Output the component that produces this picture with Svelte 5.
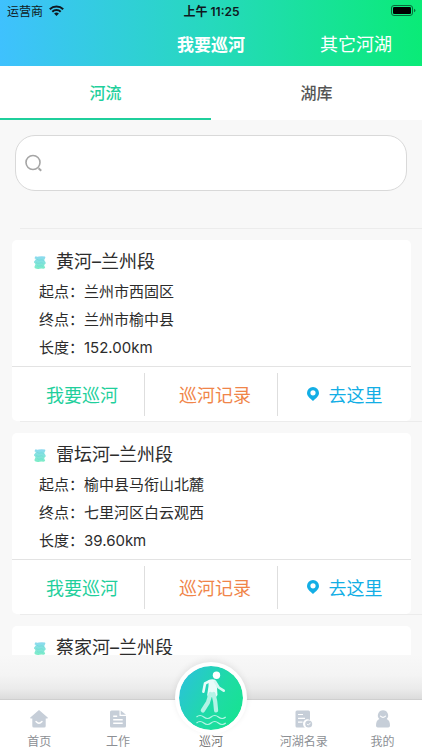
<script>
	let activeTab = 'river';
	let keyword = '';

	const tabs = [
		{ id: 'river', label: '河流' },
		{ id: 'lake', label: '湖库' }
	];

	const rivers = [
		{
			name: '黄河–兰州段',
			details: ['起点：兰州市西固区', '终点：兰州市榆中县', '长度：152.00km']
		},
		{
			name: '雷坛河–兰州段',
			details: ['起点：榆中县马衔山北麓', '终点：七里河区白云观西', '长度：39.60km']
		},
		{ name: '蔡家河–兰州段' }
	];
</script>

<div class="page">
	<header class="header">
		<div class="status">
			<span class="status__carrier">
				运营商
				<svg width="15" height="11" viewBox="0 0 15 11" aria-hidden="true">
					<g fill="none" stroke="#101820" stroke-width="2">
						<path d="M.8 4.2a9.6 9.6 0 0 1 13.4 0" />
						<path d="M3.3 6.8a6 6 0 0 1 8.4 0" />
					</g>
					<path d="M7.5 11 5.1 8.6a3.5 3.5 0 0 1 4.8 0z" fill="#101820" />
				</svg>
			</span>
			<span class="status__time">上午 11:25</span>
			<span class="status__battery">
				<svg width="25" height="11" viewBox="0 0 25 11" aria-hidden="true">
					<rect x=".5" y=".5" width="21" height="10" rx="2.5" fill="none" stroke="#0a6b3c" />
					<rect x="2" y="2" width="18" height="7" rx="1.3" fill="#000" />
					<path d="M23 3.8q1.4.4 1.4 1.7T23 7.2z" fill="#0a6b3c" />
				</svg>
			</span>
		</div>
		<div class="nav">
			<h1>我要巡河</h1>
			<a href="#other">其它河湖</a>
		</div>
	</header>

	<div class="tabs">
		{#each tabs as tab}
			<button class="tabs__item" class:active={activeTab === tab.id} on:click={() => (activeTab = tab.id)}>
				{tab.label}
			</button>
		{/each}
	</div>

	<main class="content">
		<label class="search">
			<svg width="18" height="18" viewBox="0 0 18 18" fill="none" stroke="#a5a5a5" stroke-width="1.6" aria-hidden="true">
				<circle cx="8" cy="8.5" r="7" />
				<path d="m13.6 14.3 2.6 2.4" stroke-width="2" />
			</svg>
			<input type="search" aria-label="搜索" bind:value={keyword} />
		</label>

		<ul class="list">
			{#each rivers as river}
				<li>
					<article class="card">
						<h2>
							<svg width="12" height="13" viewBox="0 0 12 13" aria-hidden="true">
								<path d="M1.5.3q1.5.8 3 .3t6.500-.2q.8 1-.2 2.400t.3 2.800-.2 2.700.3 3q-.2 1.400-1.700 1.400-2-.6-4 0T1 12.300Q0 11 1 9.500T.6 7 1 4.500.4 2.200z" fill="url(#water)" />
								<path d="M3 3.200q2 1.800 3.500.8T10 5M2 6.500q2 1.500 4 .5t3.500.8M3 9.500q1.500 1.300 3 .5t3 .5" fill="none" stroke="#62d6d6" stroke-width=".5" />
							</svg>
							{river.name}
						</h2>
						{#if river.details}
							{#each river.details as line}
								<p>{line}</p>
							{/each}
							<div class="actions">
								<button class="actions__patrol">我要巡河</button>
								<button class="actions__record">巡河记录</button>
								<button class="actions__go">
									<svg width="12" height="14" viewBox="0 0 12 14" aria-hidden="true">
										<path d="M6 0a6 6 0 0 1 6 6c0 3.2-3.2 5.4-6 8-2.8-2.6-6-4.800-6-8a6 6 0 0 1 6-6zm0 3.200a2.600 2.600 0 1 0 0 5.200 2.600 2.600 0 0 0 0-5.200z" fill="#13aee5" />
									</svg>
									去这里
								</button>
							</div>
						{/if}
					</article>
				</li>
			{/each}
		</ul>
	</main>

	<footer class="footer">
		<nav class="tabbar">
			<a href="#home">
				<svg width="18" height="18" viewBox="0 0 18 18" aria-hidden="true">
					<path d="M9 0 .3 7.5q-.5.9.5 1.100h1.500V16q0 1.500 1.500 1.500h10.400q1.500 0 1.500-1.500V8.600h1.500q1-.2.5-1.100z" fill="#c6ced8" />
					<path d="M6 11.500q3 3.400 6 0" fill="none" stroke="#fff" stroke-width="1.400" stroke-linecap="round" />
				</svg>
				<span>首页</span>
			</a>
			<a href="#work">
				<svg width="18" height="18" viewBox="0 0 18 18" aria-hidden="true">
					<path d="M2.500.5h8v5.500h6.500V16q0 1.500-1.500 1.500h-13Q1 17.500 1 16V2Q1 .5 2.500.5z" fill="#c6ced8" />
					<path d="M11.700.5 17 4.800h-5.300z" fill="#c6ced8" />
					<path d="M4.200 6.200h4M4.200 9.700h9.500M4.200 13.200h9.500" stroke="#fff" stroke-width="1.500" />
				</svg>
				<span>工作</span>
			</a>
			<a href="#patrol" class="tabbar__main">
				<span class="bubble">
					<svg width="64" height="64" viewBox="0 0 64 64" aria-hidden="true">
						<circle cx="37.500" cy="9.200" r="3.700" fill="#fff" />
						<path d="M29.500 14.200q3.500-1.500 6.500-.4l1.600 2.700.9 12.500-1.500 2H29l-.8-2 1.300-9z" fill="#e9fcfa" />
						<g fill="none" stroke-linecap="round" stroke-linejoin="round">
							<path d="M30.500 15.200 26 17.500l-1.600 8.300" stroke="#e9fcfa" stroke-width="2.600" />
							<path d="m36 15.500 3.700 6 5 3.200" stroke="#d6f8f3" stroke-width="2.600" />
							<path d="m31.500 28-2.600 8.500-5.100 8" stroke="#b4f3e6" stroke-width="4.200" />
							<path d="m34.500 28 1.700 7.500.9 9" stroke="#b4f3e6" stroke-width="4.200" />
						</g>
						<path d="M17.500 51q3.500-3 7.300 0t7.300 0 7.300 0 7.300 0M17.500 57q3.500-3 7.300 0t7.300 0 7.300 0 7.300 0" fill="none" stroke="#b9f5e7" stroke-width="1.200" />
					</svg>
				</span>
				<span>巡河</span>
			</a>
			<a href="#directory">
				<svg width="18" height="18" viewBox="0 0 18 18" aria-hidden="true">
					<path d="M2 .5h11.500q1.500 0 1.500 1.500v8a4.500 4.500 0 0 0-5 7.500H2Q.5 17.500.5 16V2Q.5.5 2 .5z" fill="#c6ced8" />
					<path d="M3 4.500h5M3 8.300h7M3 12.200h4.500" stroke="#fff" stroke-width="1.200" />
					<circle cx="13.700" cy="14" r="3.500" fill="#c6ced8" />
					<path d="m12 13.900 1.300 1.300 2.300-2.500" fill="none" stroke="#fff" />
				</svg>
				<span>河湖名录</span>
			</a>
			<a href="#mine">
				<svg width="18" height="18" viewBox="0 0 18 18" aria-hidden="true">
					<path d="M9 .3a5.200 5.200 0 0 1 3.700 8.800q3.300 1.500 3.300 6.400 0 2-1.800 2H3.800q-1.800 0-1.800-2 0-4.900 3.300-6.400A5.200 5.200 0 0 1 9 .3z" fill="#c6ced8" />
					<path d="M6.500 6.200q2.500 2.500 5 0" fill="none" stroke="#fff" stroke-width="1.200" stroke-linecap="round" />
				</svg>
				<span>我的</span>
			</a>
		</nav>
	</footer>

	<svg class="defs" width="0" height="0" aria-hidden="true">
		<linearGradient id="water" x1="0" y1="0" x2="0" y2="1">
			<stop offset="0" stop-color="#8cd9f0" />
			<stop offset="1" stop-color="#7cedc6" />
		</linearGradient>
	</svg>
</div>

<style>
	:global(body) {
		background: #f8f8f8;
	}

	.page {
		display: flex;
		flex-direction: column;
		height: 100vh;
		font-family: Inter, "Noto Sans CJK SC", sans-serif;
		color: #2c2c2c;
	}

	button,
	input {
		margin: 0;
		padding: 0;
		border: 0;
		background: none;
		font: inherit;
		color: inherit;
	}

	button,
	a {
		cursor: pointer;
	}

	a {
		text-decoration: none;
	}

	svg {
		flex: none;
	}

	.header {
		flex: none;
		background: linear-gradient(90deg, #3fc1fe, #26d9bd 50%, #0aeb77);
	}

	.status,
	.nav {
		display: grid;
		grid-template-columns: 1fr auto 1fr;
		align-items: center;
	}

	.status {
		height: 20px;
		padding: 0 6px 0 7px;
		font-size: 12px;
		color: #101820;
	}

	.status__carrier {
		display: flex;
		align-items: center;
		gap: 6px;
	}

	.status__time {
		font-weight: 600;
	}

	.status__battery {
		display: flex;
		justify-content: flex-end;
	}

	.nav {
		height: 46px;
		color: #fff;
	}

	.nav h1 {
		grid-column: 2;
		margin: 0;
		font-size: 17px;
		font-weight: 600;
	}

	.nav a {
		justify-self: end;
		padding-right: 30px;
		font-size: 18px;
		color: inherit;
	}

	.tabs {
		display: flex;
		flex: none;
		background: #fff;
	}

	.tabs__item {
		flex: 1;
		height: 54px;
		border-bottom: 2px solid transparent;
		font-size: 16px;
		font-weight: 500;
		color: #555;
	}

	.tabs__item.active {
		border-color: #1fcf9c;
		color: #1fcf9c;
	}

	.content {
		flex: 1;
		min-height: 0;
		overflow: hidden;
	}

	.search {
		display: flex;
		align-items: center;
		gap: 8px;
		height: 54px;
		margin: 15px 15px 37px;
		padding: 0 9px;
		border: 1px solid #d9d9d9;
		border-radius: 20px;
		background: #fff;
	}

	.search input {
		flex: 1;
		min-width: 0;
		height: 40px;
		font-size: 16px;
		outline: none;
	}

	.list {
		margin: 0;
		padding: 1px 0 0;
		list-style: none;
		background: linear-gradient(#ececec, #ececec) 20px 0 / 100% 1px no-repeat;
	}

	.list li {
		padding: 11px 11px 1px 12px;
		background: linear-gradient(#ececec, #ececec) 20px 100% / 100% 1px no-repeat;
	}

	.card {
		padding-top: 8px;
		border-radius: 5px;
		background: #fff;
	}

	.card h2 {
		display: flex;
		align-items: center;
		gap: 10px;
		margin: 0 0 2px;
		padding-left: 22px;
		font-size: 18px;
		font-weight: 400;
		line-height: 28px;
	}

	.card p {
		margin: 0;
		padding-left: 27px;
		font-size: 15px;
		line-height: 28px;
	}

	.actions {
		display: grid;
		grid-template-columns: repeat(3, 1fr);
		align-items: center;
		height: 54px;
		margin-top: 4px;
		border-top: 1px solid #e3e3e3;
		font-size: 18px;
	}

	.actions button {
		display: flex;
		align-items: center;
		justify-content: center;
		gap: 10px;
		height: 43px;
		border-right: 1px solid #dedede;
	}

	.actions button:last-child {
		border-right: 0;
	}

	.actions .actions__patrol {
		padding-left: 8px;
		color: #1fcf9c;
	}

	.actions .actions__record {
		padding-left: 8px;
		color: #f08549;
	}

	.actions .actions__go {
		color: #13aee5;
	}

	.footer {
		flex: none;
		padding-top: 44px;
		background: linear-gradient(#f8f8f8, #f4f4f4 20px, #ebebeb 34px, #dcdcdc 44px);
	}

	.tabbar {
		display: grid;
		grid-template-columns: 1fr 1fr 107px 1fr 1fr;
		height: 50px;
		border-top: 1px solid #cfcfcf;
		background: #fff;
	}

	.tabbar a {
		display: flex;
		flex-direction: column;
		align-items: center;
		justify-content: flex-end;
		gap: 6px;
		font-size: 12px;
		line-height: 16px;
		color: #8c8f94;
	}

	.tabbar .tabbar__main {
		gap: 0;
		color: #777;
	}

	/* the round button rises above the bar */
	.bubble {
		display: flex;
		margin-top: -40px;
		border: 4px solid #fff;
		border-radius: 50%;
		background: #fff linear-gradient(120deg, #2cbfe0, #1fdba6 55%, #14e58c) padding-box;
		background-clip: padding-box;
		box-shadow: 0 -2px 6px rgba(0, 0, 0, 0.08);
	}

	.defs {
		position: absolute;
	}
</style>
